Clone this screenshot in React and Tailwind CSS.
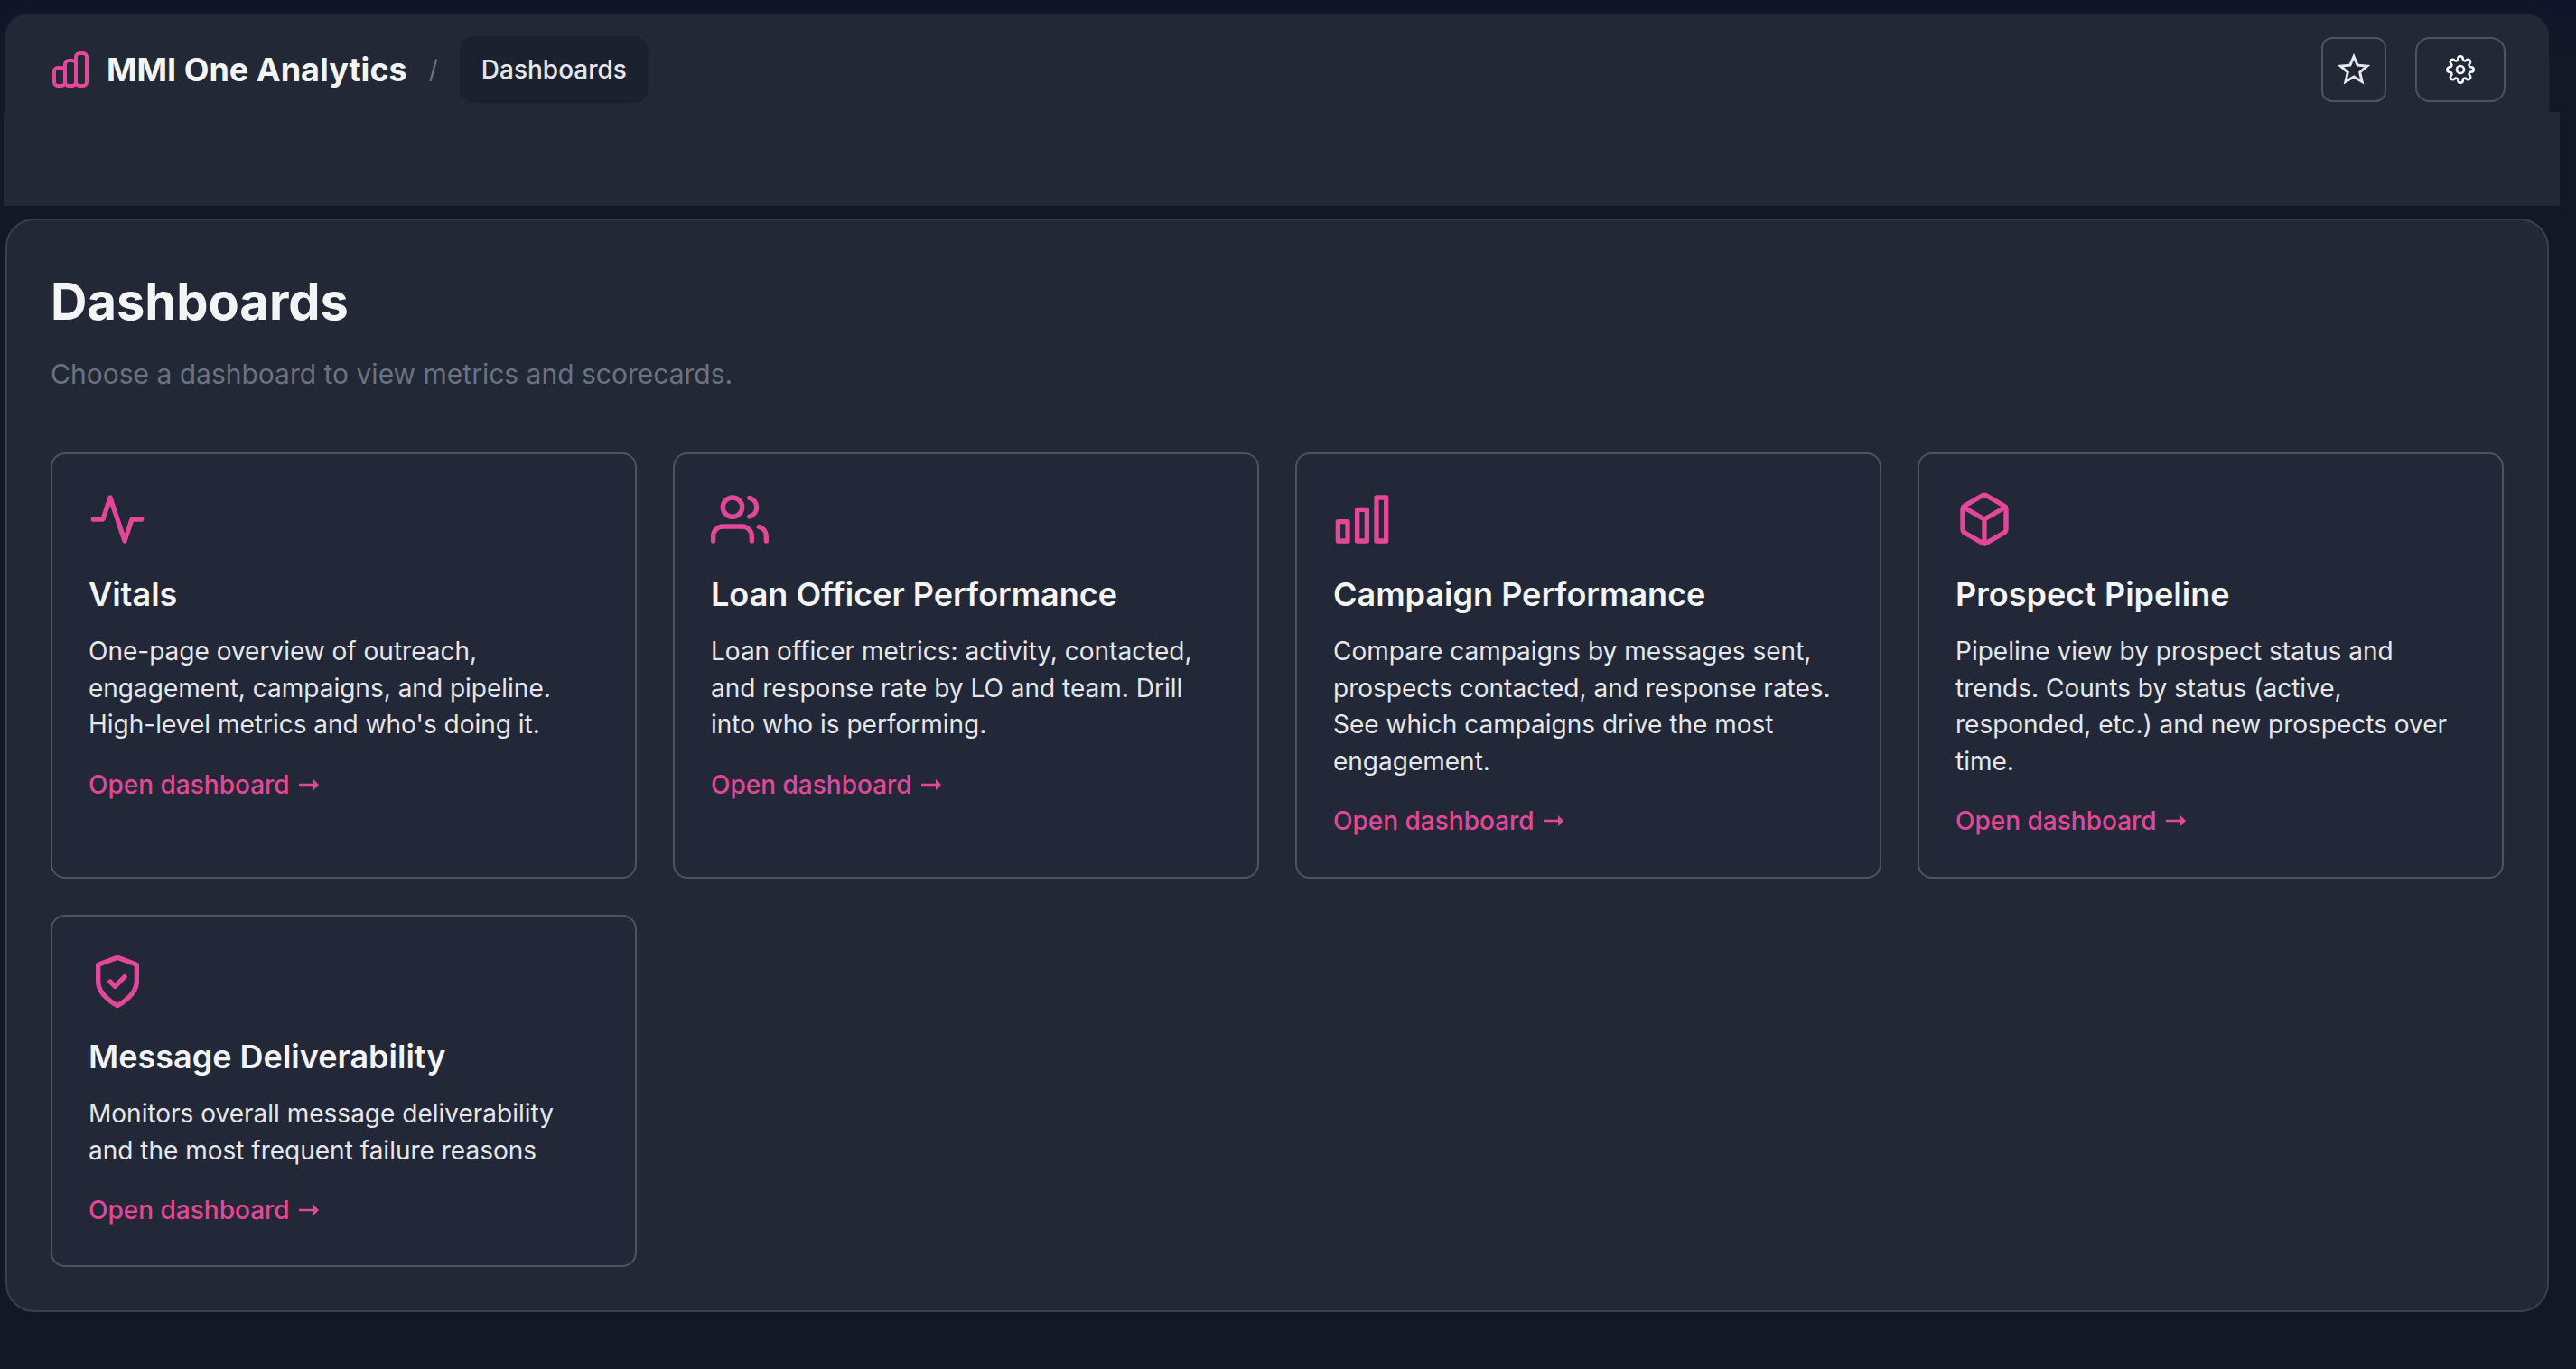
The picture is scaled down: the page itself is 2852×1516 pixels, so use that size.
import React from "react";

const iconProps = {
  viewBox: "0 0 24 24",
  fill: "none",
  stroke: "currentColor",
  strokeWidth: 2,
  strokeLinecap: "round",
  strokeLinejoin: "round",
};

const Activity = () => (
  <svg {...iconProps} className="size-16"><polyline points="22 12 18 12 15 21 9 3 6 12 2 12" /></svg>
);
const Users = () => (
  <svg {...iconProps} className="size-16">
    <path d="M17 21v-2a4 4 0 0 0-4-4H5a4 4 0 0 0-4 4v2" />
    <circle cx="9" cy="7" r="4" />
    <path d="M23 21v-2a4 4 0 0 0-3-3.87" />
    <path d="M16 3.13a4 4 0 0 1 0 7.75" />
  </svg>
);
const Bars = () => (
  <svg {...iconProps} className="size-16">
    <rect x="18" y="3" width="4" height="18" />
    <rect x="10" y="8" width="4" height="13" />
    <rect x="2" y="13" width="4" height="8" />
  </svg>
);
const Box = () => (
  <svg {...iconProps} className="size-16">
    <path d="M21 16V8a2 2 0 0 0-1-1.73l-7-4a2 2 0 0 0-2 0l-7 4A2 2 0 0 0 3 8v8a2 2 0 0 0 1 1.73l7 4a2 2 0 0 0 2 0l7-4A2 2 0 0 0 21 16z" />
    <polyline points="3.27 6.96 12 12.01 20.73 6.96" />
    <line x1="12" y1="22.08" x2="12" y2="12" />
  </svg>
);
const Shield = () => (
  <svg {...iconProps} className="size-16">
    <path d="M12 22s8-4 8-10V5l-8-3-8 3v7c0 6 8 10 8 10z" />
    <path d="M9 12l2 2 4-4" />
  </svg>
);
const Logo = () => (
  <svg {...iconProps} viewBox="2 2 20 20" className="size-10 text-[#e34898]">
    <rect x="3" y="11" width="6" height="10" rx="2" />
    <rect x="9" y="7" width="6" height="14" rx="2" />
    <rect x="15" y="3" width="6" height="18" rx="2" />
  </svg>
);
const Star = () => (
  <svg viewBox="0 0 24 24" fill="currentColor" className="size-11 shrink-0">
    <path d="M22 9.24l-7.19-.62L12 2 9.19 8.63 2 9.24l5.46 4.73L5.82 21 12 17.27 18.18 21l-1.63-7.03L22 9.24zM12 15.4l-3.76 2.27 1-4.28-3.32-2.88 4.38-.38L12 6.1l1.71 4.04 4.38.38-3.32 2.88 1 4.28L12 15.4z" />
  </svg>
);
const Arrow = () => (
  <svg viewBox="0 0 22 12" fill="currentColor" className="ml-[10.5px] h-3 w-[22px]">
    <path d="M0 4.700h16V0l6 6-6 6V7.300H0z" />
  </svg>
);
const Gear = () => (
  <svg {...iconProps} className="size-8">
    <circle cx="12" cy="12" r="3" />
    <path d="M19.4 15a1.65 1.65 0 0 0 .33 1.82l.06.06a2 2 0 0 1 0 2.83 2 2 0 0 1-2.83 0l-.06-.06a1.65 1.65 0 0 0-1.82-.33 1.65 1.65 0 0 0-1 1.51V21a2 2 0 0 1-2 2 2 2 0 0 1-2-2v-.09A1.65 1.65 0 0 0 9 19.4a1.65 1.65 0 0 0-1.82.33l-.06.06a2 2 0 0 1-2.83 0 2 2 0 0 1 0-2.83l.06-.06a1.65 1.65 0 0 0 .33-1.82 1.65 1.65 0 0 0-1.51-1H3a2 2 0 0 1-2-2 2 2 0 0 1 2-2h.09A1.65 1.65 0 0 0 4.6 9a1.65 1.65 0 0 0-.33-1.82l-.06-.06a2 2 0 0 1 0-2.83 2 2 0 0 1 2.83 0l.06.06a1.65 1.65 0 0 0 1.82.33H9a1.65 1.65 0 0 0 1-1.51V3a2 2 0 0 1 2-2 2 2 0 0 1 2 2v.09a1.65 1.65 0 0 0 1 1.51 1.65 1.65 0 0 0 1.82-.33l.06-.06a2 2 0 0 1 2.83 0 2 2 0 0 1 0 2.83l-.06.06a1.65 1.65 0 0 0-.33 1.82V9a1.65 1.65 0 0 0 1.51 1H21a2 2 0 0 1 2 2 2 2 0 0 1-2 2h-.09a1.65 1.65 0 0 0-1.51 1z" />
  </svg>
);

const cards = [
  { icon: Activity, title: "Vitals", lines: ["One-page overview of outreach,", "engagement, campaigns, and pipeline.", "High-level metrics and who's doing it."] },
  { icon: Users, title: "Loan Officer Performance", lines: ["Loan officer metrics: activity, contacted,", "and response rate by LO and team. Drill", "into who is performing."] },
  { icon: Bars, title: "Campaign Performance", lines: ["Compare campaigns by messages sent,", "prospects contacted, and response rates.", "See which campaigns drive the most", "engagement."] },
  { icon: Box, title: "Prospect Pipeline", lines: ["Pipeline view by prospect status and", "trends. Counts by status (active,", "responded, etc.) and new prospects over", "time."] },
  { icon: Shield, title: "Message Deliverability", lines: ["Monitors overall message deliverability", "and the most frequent failure reasons"] },
];

function Card({ icon: Icon, title, lines }) {
  return (
    <a className="block rounded-[16px] border-2 border-[#4c5461] bg-[#222837] p-10 text-[#e34898]">
      <Icon />
      <h2 className="mt-6 text-[36px] leading-[54px] font-semibold text-[#f3f4f6]">{title}</h2>
      <p className="mt-4 text-[28px] leading-[40.6px] text-[#e5e7eb]">
        {lines.map((l) => <span key={l} className="block whitespace-nowrap">{l}</span>)}
      </p>
      <div className="mt-[25px] flex items-center text-[28px] leading-[42px] font-medium">
        Open dashboard
        <Arrow />
      </div>
    </a>
  );
}

export default function App() {
  return (
    <div className="h-[1516px] w-[2852px] overflow-hidden bg-[#121826] bg-linear-to-b from-[#10162a] from-0% to-[#121826] to-5% pt-4 font-['Inter',sans-serif]">
      <header className="ml-[6px] flex h-[108px] w-[2816px] items-center rounded-t-[24px] bg-[#222836] pt-[14px] pr-[48px] pl-[52px] shadow-[0_0_6px_rgba(236,72,153,0.08)]">
        <Logo />
        <span className="ml-5 text-[36px] font-bold text-[#f3f4f6]">MMI One Analytics</span>
        <span className="ml-6 text-[28px] text-[#6b7280]">/</span>
        <span className="ml-6 flex h-[74px] items-center rounded-[16px] bg-[#1b212e] px-6 text-[28px] font-medium text-[#e5e7eb]">Dashboards</span>
        <span className="ml-auto flex size-[72px] items-center justify-center rounded-[12px] border-2 border-[#4c5461] text-[#e5e7eb]">
          <Star />
        </span>
        <span className="ml-8 flex h-[72px] w-[100px] items-center justify-center rounded-[16px] border-2 border-[#4c5461] text-[#f3f4f6]">
          <Gear />
        </span>
      </header>
      <div className="relative ml-1 h-[104px] w-[2830px] bg-[#222836]" />
      <main className="mt-[14px] ml-[6px] h-[1211px] w-[2816px] rounded-[32px] border-2 border-[#39404d] bg-[#222836] px-12 pt-[48px]">
        <h1 className="text-[56px] leading-[84px] font-bold text-[#f3f4f6]">Dashboards</h1>
        <p className="mt-4 text-[30px] leading-[45px] text-[#6b7280]">Choose a dashboard to view metrics and scorecards.</p>
        <div className="mt-16 grid grid-cols-4 grid-rows-[472px_390px] gap-10">
          {cards.map((c) => <Card key={c.title} {...c} />)}
        </div>
      </main>
    </div>
  );
}
